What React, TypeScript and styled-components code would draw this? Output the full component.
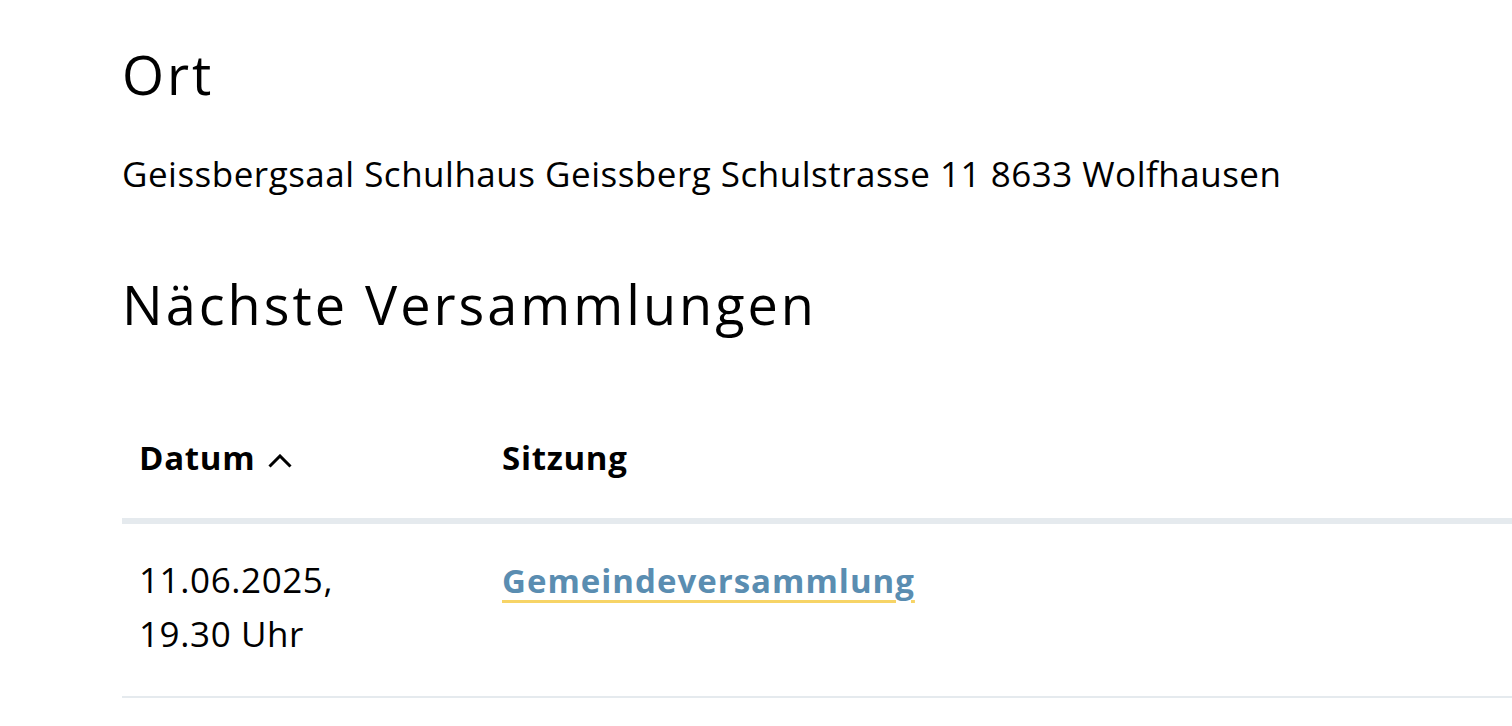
import styled, { createGlobalStyle } from 'styled-components';

const GlobalStyle = createGlobalStyle`
  * {
    box-sizing: border-box;
  }
  body {
    margin: 0;
    background: #ffffff;
    color: #000000;
    font-family: 'Open Sans', 'Noto Sans', sans-serif;
  }
`;

const Page = styled.main`
  padding: 37px 0 0 122px;
  overflow: hidden;
`;

const SectionTitle = styled.h2<{ $gap?: number }>`
  margin: ${(p) => p.$gap ?? 0}px 0 0;
  font-size: 54px;
  font-weight: 400;
  line-height: 74px;
  letter-spacing: 3px;
`;

const Address = styled.p`
  margin: 39px 0 0;
  font-size: 35px;
  line-height: 48px;
  letter-spacing: 0.5px;
`;

const Table = styled.table`
  width: 100%;
  margin-top: 54px;
  border-collapse: collapse;
  table-layout: fixed;
`;

const HeadCell = styled.th<{ $width?: number }>`
  width: ${(p) => (p.$width ? `${p.$width}px` : 'auto')};
  padding: 41px 17px 38px;
  text-align: left;
  font-size: 33px;
  font-weight: 700;
  line-height: 44px;
  letter-spacing: 0.7px;
  border-bottom: 6px solid #e5eaee;
`;

const SortIcon = styled.svg`
  display: inline-block;
  width: 24px;
  height: 14px;
  margin-left: 13px;
  vertical-align: 2px;
`;

const Cell = styled.td`
  padding: 29px 17px 35px;
  vertical-align: top;
  font-size: 35px;
  line-height: 54px;
  letter-spacing: 0.6px;
  border-bottom: 2px solid #e5eaee;
`;

const MeetingLink = styled.a`
  color: #5a8db1;
  font-size: 33px;
  font-weight: 700;
  letter-spacing: 1px;
  text-decoration: underline;
  text-decoration-color: #f7d466;
  text-decoration-thickness: 3px;
  text-underline-offset: 7px;
`;

const App = () => {
  return (
    <>
      <GlobalStyle />
      <Page>
        <SectionTitle>Ort</SectionTitle>
        <Address>Geissbergsaal Schulhaus Geissberg Schulstrasse 11 8633 Wolfhausen</Address>
        <SectionTitle $gap={69}>Nächste Versammlungen</SectionTitle>
        <Table>
          <thead>
            <tr>
              <HeadCell $width={363}>
                Datum
                <SortIcon viewBox="0 0 24 14" aria-hidden="true">
                  <polyline points="1.5,12.5 12,2 22.5,12.5" fill="none" stroke="#000" strokeWidth="3" />
                </SortIcon>
              </HeadCell>
              <HeadCell>Sitzung</HeadCell>
            </tr>
          </thead>
          <tbody>
            <tr>
              <Cell>
                11.06.2025,
                <br />
                19.30 Uhr
              </Cell>
              <Cell>
                <MeetingLink href="#">Gemeindeversammlung</MeetingLink>
              </Cell>
            </tr>
          </tbody>
        </Table>
      </Page>
    </>
  );
};

export default App;
